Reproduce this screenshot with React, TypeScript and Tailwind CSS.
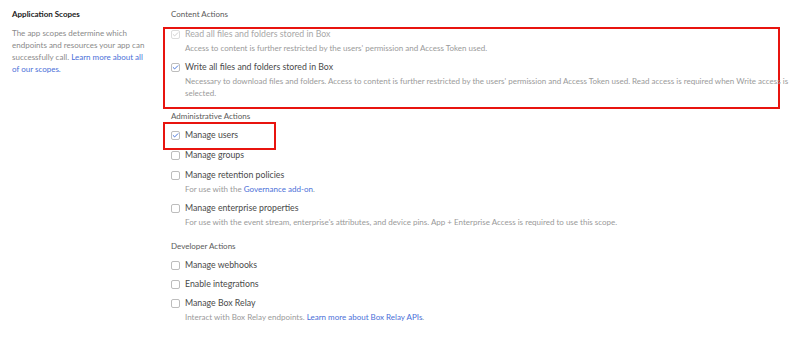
import { Check } from "lucide-react";

type Scope = {
  label: string;
  checked?: boolean;
  disabled?: boolean;
  desc?: React.ReactNode;
};

const FONT = { fontFamily: "Lato, 'Open Sans', sans-serif" };

function Box({ checked, disabled }: { checked?: boolean; disabled?: boolean }) {
  return (
    <span
      className={`flex h-[9px] w-[9px] shrink-0 items-center justify-center rounded-[2px] border bg-white ${
        disabled ? "border-[#dcdcdc]" : "border-[#bdbdbd]"
      }`}
    >
      {checked && (
        <Check size={7} strokeWidth={3} className={disabled ? "text-[#c8c8c8]" : "text-[#2f62d6]"} />
      )}
    </span>
  );
}

function ScopeRow({ scope, className = "" }: { scope: Scope; className?: string }) {
  return (
    <div className={className}>
      <label className="flex h-[12px] items-center gap-[5px]">
        <Box checked={scope.checked} disabled={scope.disabled} />
        <span className={`text-[8.75px] leading-[12px] ${scope.disabled ? "text-[#a8a8a8]" : "text-[#4a4a4a]"}`}>
          {scope.label}
        </span>
      </label>
      {scope.desc && (
        <p className="mt-[2px] w-[620px] pl-[14px] text-[8px] leading-[12px] text-[#9a9a9a]">{scope.desc}</p>
      )}
    </div>
  );
}

function Link({ children }: { children: React.ReactNode }) {
  return <a className="text-[#4a6fd8]">{children}</a>;
}

export default function App() {
  return (
    <div className="flex h-[342px] w-[800px] bg-white pt-[8px]" style={FONT}>
      <aside className="w-[171px] shrink-0 pl-[12px] pr-[22px]">
        <h2 className="text-[8px] font-bold leading-[12px] text-[#222]">Application Scopes</h2>
        <p className="mt-[7px] text-[8px] leading-[12px] text-[#8a8a8a]">
          The app scopes determine which endpoints and resources your app can successfully call.{" "}
          <Link>Learn more about all of our scopes.</Link>
        </p>
      </aside>

      <main className="flex-1">
        <h3 className="text-[8px] leading-[12px] text-[#5a5a5a]">Content Actions</h3>
        <div className="ml-[-8px] mt-[7px] w-[617px] border-2 border-[#e8140f] pb-[8px] pl-[6px]">
          <ScopeRow
            className="mt-[-1px] pb-[7px]"
            scope={{
              label: "Read all files and folders stored in Box",
              checked: true,
              disabled: true,
              desc: "Access to content is further restricted by the users' permission and Access Token used.",
            }}
          />
          <ScopeRow
            scope={{
              label: "Write all files and folders stored in Box",
              checked: true,
              desc: "Necessary to download files and folders. Access to content is further restricted by the users' permission and Access Token used. Read access is required when Write access is selected.",
            }}
          />
        </div>

        <h3 className="mt-[1px] text-[8px] leading-[12px] text-[#5a5a5a]">Administrative Actions</h3>
        <div className="ml-[-8px] w-[113px] border-2 border-[#e8140f] pb-[7px] pl-[6px] pt-[5px]">
          <ScopeRow scope={{ label: "Manage users", checked: true }} />
        </div>
        <ScopeRow className="mt-[-1px] pb-[8px]" scope={{ label: "Manage groups" }} />
        <ScopeRow
          className="pb-[7px]"
          scope={{
            label: "Manage retention policies",
            desc: (
              <>
                For use with the <Link>Governance add-on</Link>.
              </>
            ),
          }}
        />
        <ScopeRow
          scope={{
            label: "Manage enterprise properties",
            desc: "For use with the event stream, enterprise's attributes, and device pins. App + Enterprise Access is required to use this scope.",
          }}
        />

        <h3 className="mt-[12px] text-[8px] leading-[12px] text-[#5a5a5a]">Developer Actions</h3>
        <div className="mt-[7px] flex flex-col gap-[7px]">
          <ScopeRow scope={{ label: "Manage webhooks" }} />
          <ScopeRow scope={{ label: "Enable integrations" }} />
          <ScopeRow
            scope={{
              label: "Manage Box Relay",
              desc: (
                <>
                  Interact with Box Relay endpoints. <Link>Learn more about Box Relay APIs</Link>.
                </>
              ),
            }}
          />
        </div>
      </main>
    </div>
  );
}
